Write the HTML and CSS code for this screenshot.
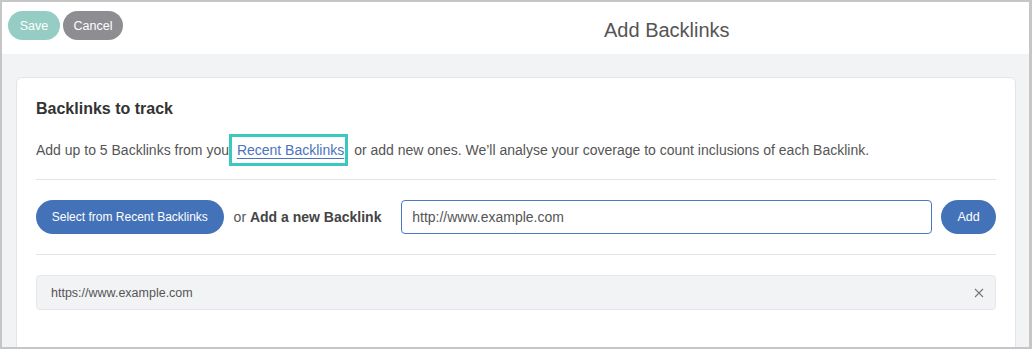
FILE: index.html
```html
<!DOCTYPE html>
<html lang="en">

<head>
    <meta charset="UTF-8">
    <meta name="viewport" content="width=device-width, initial-scale=1.0">
    <title>Add Backlinks</title>
    <link rel="stylesheet" href="styles.css">
</head>

<body>
    <div class="frame">
        <header class="topbar">
            <div class="actions">
                <button class="btn btn-save">Save</button>
                <button class="btn btn-cancel">Cancel</button>
            </div>
            <h1 class="title">Add Backlinks</h1>
        </header>

        <main class="content">
            <section class="card">
                <h2 class="card-title">Backlinks to track</h2>
                <p class="intro">Add up to 5 Backlinks from you <span class="highlight"><a href="#">Recent Backlinks</a></span> or add new ones. We’ll analyse your coverage to count inclusions of each Backlink.</p>

                <hr>

                <div class="add-row">
                    <button class="btn btn-blue btn-select">Select from Recent Backlinks</button>
                    <span class="or">or <b>Add a new Backlink</b></span>
                    <input class="url-input" type="text" value="http://www.example.com">
                    <button class="btn btn-blue btn-add">Add</button>
                </div>

                <hr>

                <div class="link-item">
                    <span>https://www.example.com</span>
                    <svg class="remove" width="10" height="10" viewBox="0 0 10 10">
                        <path d="M1 1L9 9M9 1L1 9" stroke="#777" stroke-width="1.1" fill="none" />
                    </svg>
                </div>
            </section>
        </main>
    </div>
</body>

</html>
```

FILE: styles.css
```css
* {
    margin: 0;
    padding: 0;
    box-sizing: border-box;
}

html,
body {
    height: 100%;
}

body {
    font-family: "Liberation Sans", Arial, sans-serif;
    color: #555;
    overflow: hidden;
}

.frame {
    height: 349px;
    border: 2px solid #c6c6c6;
    border-right-width: 3px;
    background: #f2f3f5;
    display: flex;
    flex-direction: column;
    overflow: hidden;
}

.topbar {
    flex-shrink: 0;
    height: 52px;
    background: #fff;
    display: flex;
    align-items: flex-start;
    padding: 9px 6px 0;
}

.actions {
    display: flex;
    gap: 3px;
}

.btn {
    border: none;
    border-radius: 16px;
    color: #fff;
    font-family: inherit;
    font-size: 12.5px;
    height: 29px;
}

.btn-save {
    width: 52px;
    background: #95cdc5;
}

.btn-cancel {
    width: 60px;
    background: #8e8e92;
}

.title {
    font-size: 20px;
    font-weight: normal;
    color: #555;
    margin-left: 481px;
    line-height: 38px;
}

.content {
    flex: 1;
    padding: 23px 13px 0 14px;
}

.card {
    background: #fff;
    border: 1px solid #e2e4e8;
    border-radius: 6px;
    height: 300px;
    padding: 21px 19px 0;
}

.card-title {
    font-size: 16px;
    color: #333;
    line-height: 20px;
}

.intro {
    font-size: 14px;
    line-height: 20px;
    margin-top: 21px;
    margin-bottom: 19px;
}

.highlight {
    border: 3px solid #3cc8c0;
    padding: 5px 1px 5px 5px;
    margin-left: -4px;
    margin-right: 2px;
}

.highlight a {
    color: #4a74bd;
    text-underline-offset: 3px;
}

hr {
    border: none;
    border-top: 1px solid #e4e4e4;
}

.add-row {
    display: flex;
    align-items: center;
    height: 74px;
}

.btn-select {
    width: 188px;
    height: 34px;
    border-radius: 17px;
    background: #4472b8;
    font-size: 12px;
}

.or {
    font-size: 14px;
    margin-left: 10px;
    width: 168px;
}

.or b {
    color: #444;
}

.url-input {
    width: 532px;
    height: 34px;
    border: 1px solid #4a78c4;
    border-radius: 4px;
    padding: 0 10px;
    font-family: inherit;
    font-size: 14px;
    color: #555;
}

.btn-add {
    width: 55px;
    height: 34px;
    border-radius: 17px;
    background: #4472b8;
    margin-left: 9px;
}

.link-item {
    margin-top: 20px;
    height: 35px;
    background: #f2f3f5;
    border: 1px solid #e6e7ea;
    border-radius: 4px;
    display: flex;
    align-items: center;
    justify-content: space-between;
    padding: 0 11px 0 14px;
    font-size: 12.5px;
    color: #555;
}
```
